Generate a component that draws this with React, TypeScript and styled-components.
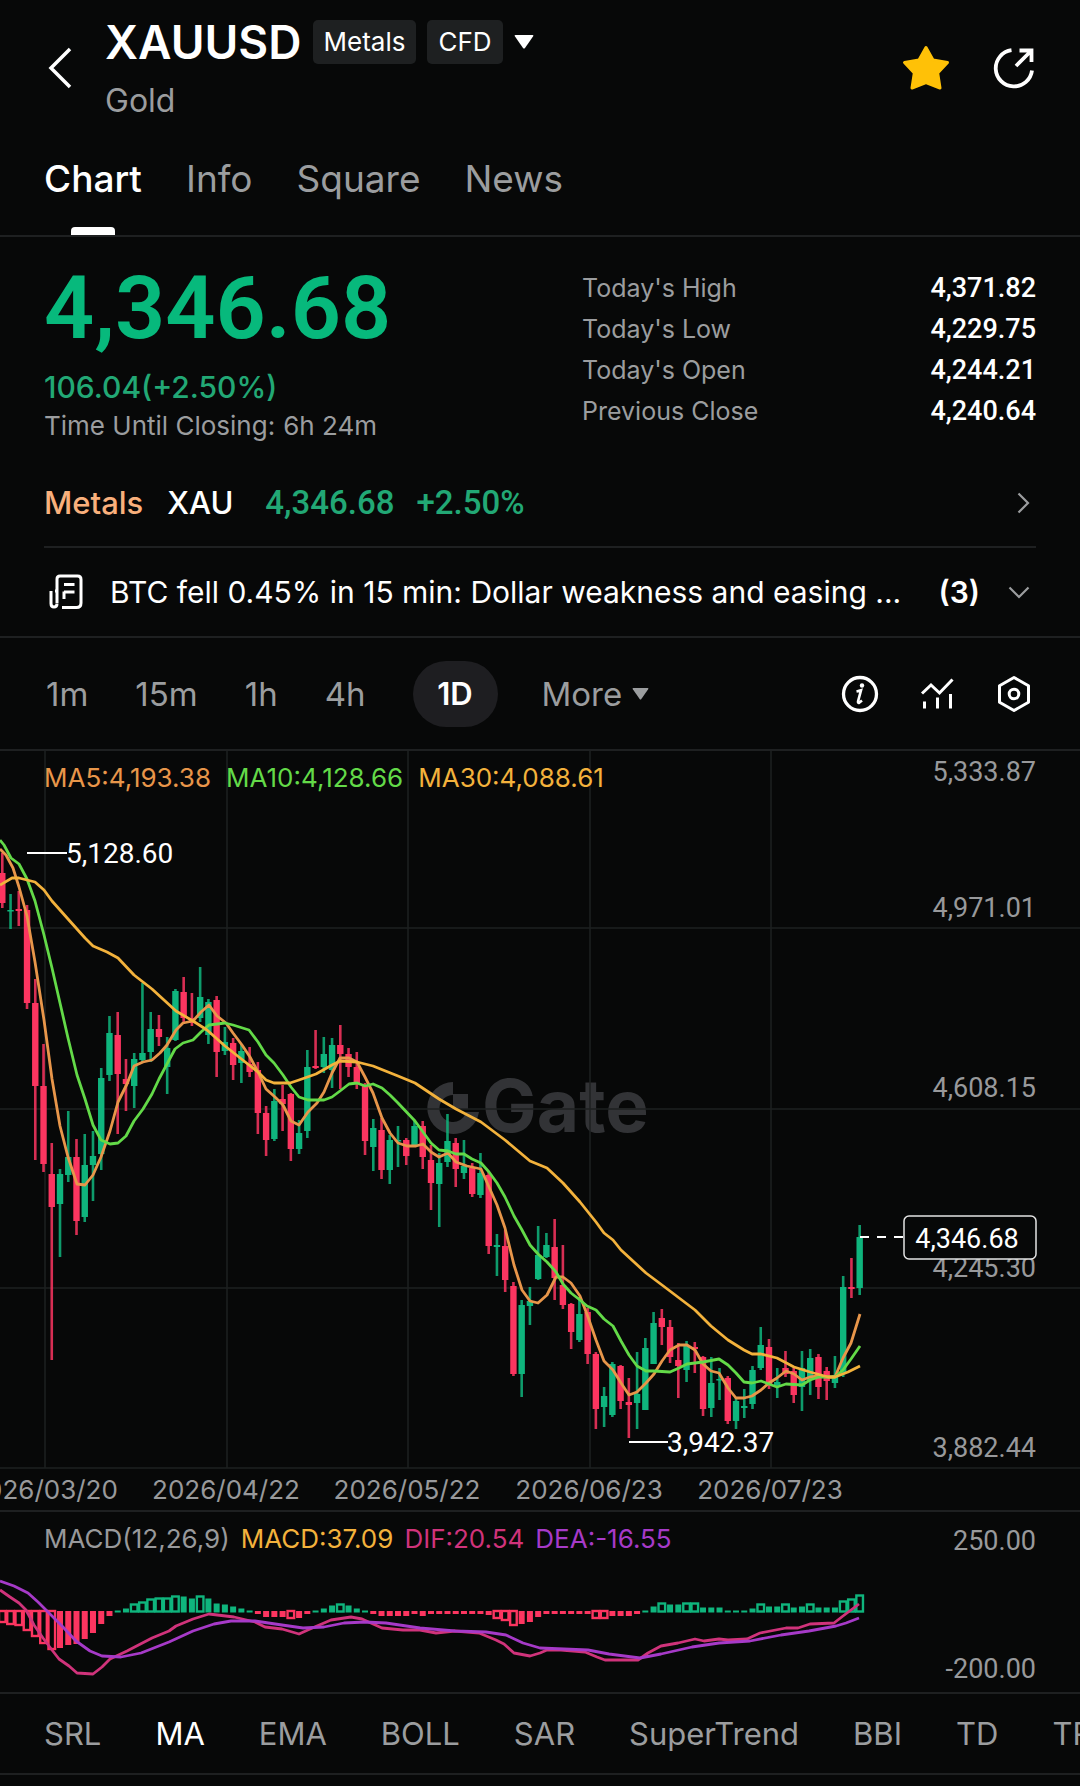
import React from "react";
import styled, { createGlobalStyle, css } from "styled-components";

const color = {
  bg: "#070808",
  text: "#ffffff",
  muted: "#9b9d9f",
  axis: "#98999b",
  line: "#1e2021",
  up: "#0fb57d",
  down: "#fc3560",
  price: "#07b97c",
  ma5: "#e8964a",
  ma10: "#63da48",
  ma30: "#f3b23c",
  dif: "#d0337b",
  dea: "#a63ac8",
};

const numeric = `Roboto, "Liberation Sans", sans-serif`;

const GlobalStyle = createGlobalStyle`
  *, *::before, *::after { box-sizing: border-box; }
  body {
    margin: 0;
    background: ${color.bg};
    color: ${color.text};
    font-family: Inter, "Liberation Sans", sans-serif;
    overflow-x: hidden;
  }
  button, a { font: inherit; color: inherit; }
`;

const Page = styled.main`
  display: flex;
  flex-direction: column;
  width: 100%;
  overflow: hidden;
`;

const PlainButton = styled.button`
  display: inline-flex;
  align-items: center;
  border: 0;
  padding: 0;
  background: none;
  cursor: pointer;
  white-space: nowrap;
`;

const Header = styled.header`
  display: flex;
  align-items: center;
  gap: 32px;
  padding: 14px 44px 0 46px;
`;

const Heading = styled.div`
  display: flex;
  flex-direction: column;
  gap: 10px;
  flex: 1;
`;

const TitleRow = styled.div`
  display: flex;
  align-items: center;
  gap: 11px;
`;

const Title = styled.h1`
  margin: 0;
  font-size: 46px;
  line-height: 56px;
  font-weight: 600;
`;

const Badge = styled.span`
  padding: 0 11px;
  border-radius: 5px;
  background: #1e2021;
  font-size: 26px;
  line-height: 44px;
`;

const Subtitle = styled.div`
  font-size: 32px;
  line-height: 42px;
  color: ${color.muted};
`;

const HeaderActions = styled.div`
  display: flex;
  align-items: center;
  gap: 42px;
`;

const Tabs = styled.nav`
  display: flex;
  gap: 44px;
  padding: 0 44px;
  margin-top: 14px;
  border-bottom: 2px solid ${color.line};
`;

const Tab = styled.a<{ $active?: boolean }>`
  display: flex;
  flex-direction: column;
  align-items: center;
  justify-content: space-between;
  height: 99px;
  padding-top: 20px;
  font-size: 37px;
  line-height: 46px;
  text-decoration: none;
  color: ${(p) => (p.$active ? color.text : color.muted)};
  font-weight: ${(p) => (p.$active ? 500 : 400)};
  ${(p) =>
    p.$active &&
    css`
      &::after {
        content: "";
        width: 44px;
        height: 8px;
        border-radius: 4px 4px 0 0;
        background: ${color.text};
      }
    `}
`;

const Quote = styled.section`
  display: grid;
  grid-template-columns: 538px 1fr;
  padding: 26px 44px 0;
`;

const Price = styled.div`
  font-family: ${numeric};
  font-size: 88px;
  line-height: 90px;
  font-weight: 600;
  color: ${color.price};
`;

const Change = styled.div`
  margin-top: 14px;
  font-size: 30px;
  line-height: 40px;
  font-weight: 500;
  color: #22a875;
`;

const Closing = styled.div`
  display: flex;
  gap: 8px;
  font-size: 26px;
  line-height: 37px;
  color: ${color.muted};
`;

const Stats = styled.dl`
  margin: 5px 0 0;
`;

const Stat = styled.div`
  display: flex;
  justify-content: space-between;
  font-size: 25px;
  line-height: 41px;
  dt { color: ${color.muted}; }
  dd {
    margin: 0;
    font-family: ${numeric};
    font-size: 27px;
    font-weight: 500;
  }
`;

const AssetLink = styled.a`
  display: flex;
  align-items: center;
  height: 89px;
  margin: 15px 44px 0;
  padding-right: 6px;
  border-bottom: 2px solid ${color.line};
  font-size: 31px;
  text-decoration: none;
`;

const AssetPart = styled.span<{ $tone?: string; $gap: number }>`
  margin-right: ${(p) => p.$gap}px;
  color: ${(p) => p.$tone ?? color.text};
  font-weight: 500;
`;

const AssetNumber = styled(AssetPart)`
  font-family: ${numeric};
  font-size: 33px;
`;

const Spacer = styled.span`
  flex: 1;
`;

const NewsButton = styled(PlainButton)`
  width: 100%;
  height: 90px;
  padding: 0 50px 0 48px;
  border-bottom: 2px solid ${color.line};
  font-size: 30px;
  text-align: left;
`;

const NewsTitle = styled.span`
  flex: 1;
  min-width: 0;
  margin-left: 26px;
  overflow: hidden;
  text-overflow: ellipsis;
  white-space: nowrap;
`;

const NewsCount = styled.span`
  margin: 0 28px 0 24px;
  font-weight: 600;
`;

const Intervals = styled.div`
  display: flex;
  align-items: center;
  height: 113px;
  padding: 0 47px 0 46px;
  border-bottom: 2px solid ${color.line};
  font-size: 33px;
`;

const Interval = styled(PlainButton)<{ $active?: boolean }>`
  margin-right: 47px;
  color: ${color.muted};
  ${(p) =>
    p.$active &&
    css`
      justify-content: center;
      min-width: 85px;
      height: 66px;
      margin-right: 44px;
      border-radius: 33px;
      background: #1e1e21;
      color: ${color.text};
      font-size: 31px;
      font-weight: 600;
    `}
`;

const Tools = styled.div`
  display: flex;
  align-items: center;
  gap: 39px;
  margin-left: auto;
`;

const Pane = styled.section`
  position: relative;
  border-bottom: 2px solid ${color.line};
  svg { display: block; width: 100%; height: auto; }
`;

const Legend = styled.div<{ $gap: number }>`
  position: absolute;
  left: 44px;
  top: 11px;
  display: flex;
  gap: ${(p) => p.$gap}px;
  font-size: 26px;
  line-height: 32px;
`;

const LegendItem = styled.span<{ $tone: string }>`
  color: ${(p) => p.$tone};
`;

const Indicators = styled.nav`
  display: flex;
  gap: 54px;
  height: 81px;
  padding: 0 44px;
  border-bottom: 2px solid ${color.line};
  font-size: 31px;
  overflow: hidden;
`;

const Indicator = styled(PlainButton)<{ $active?: boolean }>`
  color: ${(p) => (p.$active ? color.text : color.muted)};
`;

const AxisText = styled.text`
  font-family: ${numeric};
  font-size: 27px;
  fill: ${color.axis};
`;

const DateText = styled.text`
  font-size: 26px;
  fill: ${color.axis};
`;

const MarkText = styled.text<{ $large?: boolean }>`
  font-family: ${numeric};
  font-size: ${(p) => (p.$large ? 28 : 27)}px;
  fill: ${color.text};
`;

const Watermark = styled.text`
  font-size: 73px;
  font-weight: 700;
`;

/* ---------- chart data ---------- */

// Vertical positions per candle: direction, high, body top, body bottom, low.
type Candle = ["u" | "d", number, number, number, number];

const candles: Candle[] = [
  ["d", 853, 873, 903, 908], ["u", 894, 910, 911, 929], ["d", 891, 909, 911, 926], ["d", 905, 910, 1003, 1009],
  ["d", 979, 1003, 1086, 1160], ["d", 1044, 1086, 1164, 1172], ["d", 1143, 1174, 1207, 1360], ["u", 1169, 1174, 1204, 1257],
  ["u", 1111, 1157, 1175, 1182], ["d", 1139, 1157, 1221, 1235], ["u", 1134, 1165, 1217, 1222], ["u", 1131, 1156, 1165, 1201],
  ["u", 1068, 1078, 1154, 1170], ["u", 1016, 1033, 1075, 1081], ["d", 1012, 1035, 1074, 1134], ["d", 1059, 1079, 1084, 1111],
  ["u", 1053, 1059, 1086, 1108], ["u", 983, 1053, 1060, 1062], ["u", 1012, 1029, 1052, 1062], ["d", 1015, 1029, 1037, 1046],
  ["u", 1037, 1048, 1067, 1094], ["u", 989, 991, 1040, 1041], ["d", 977, 992, 1018, 1022], ["d", 993, 1018, 1023, 1026],
  ["u", 967, 997, 1018, 1022], ["u", 999, 1002, 1035, 1044], ["d", 996, 1000, 1052, 1077], ["u", 1027, 1042, 1051, 1055],
  ["d", 1038, 1043, 1065, 1080], ["u", 1044, 1051, 1063, 1083], ["d", 1047, 1064, 1072, 1077], ["d", 1062, 1070, 1113, 1134],
  ["d", 1106, 1113, 1140, 1156], ["u", 1089, 1101, 1139, 1141], ["d", 1085, 1099, 1104, 1131], ["d", 1093, 1094, 1149, 1161],
  ["u", 1120, 1133, 1149, 1154], ["u", 1050, 1067, 1131, 1138], ["d", 1030, 1066, 1068, 1069], ["u", 1037, 1054, 1067, 1073],
  ["u", 1038, 1045, 1070, 1088], ["d", 1025, 1045, 1054, 1089], ["d", 1048, 1054, 1067, 1077], ["d", 1052, 1067, 1084, 1089],
  ["d", 1083, 1086, 1141, 1155], ["u", 1119, 1128, 1147, 1171], ["d", 1118, 1130, 1170, 1179], ["u", 1135, 1140, 1170, 1184],
  ["u", 1126, 1140, 1141, 1167], ["d", 1138, 1140, 1156, 1165], ["u", 1120, 1126, 1145, 1147], ["d", 1121, 1126, 1157, 1169],
  ["d", 1145, 1160, 1183, 1210], ["u", 1153, 1163, 1184, 1227], ["u", 1114, 1141, 1162, 1167], ["d", 1138, 1143, 1169, 1187],
  ["u", 1140, 1166, 1173, 1179], ["d", 1163, 1168, 1194, 1197], ["u", 1153, 1173, 1195, 1198], ["d", 1172, 1175, 1246, 1254],
  ["u", 1234, 1245, 1247, 1276], ["d", 1230, 1246, 1280, 1292], ["d", 1282, 1286, 1374, 1376], ["u", 1300, 1305, 1374, 1397],
  ["u", 1287, 1301, 1306, 1325], ["u", 1226, 1255, 1279, 1280], ["u", 1233, 1245, 1257, 1258], ["d", 1219, 1247, 1278, 1300],
  ["d", 1245, 1285, 1305, 1309], ["d", 1303, 1304, 1332, 1349], ["u", 1297, 1314, 1340, 1342], ["d", 1308, 1312, 1354, 1364],
  ["d", 1352, 1354, 1409, 1429], ["u", 1387, 1396, 1407, 1427], ["u", 1362, 1364, 1415, 1417], ["d", 1365, 1366, 1401, 1409],
  ["d", 1378, 1402, 1405, 1438], ["u", 1352, 1394, 1403, 1429], ["u", 1338, 1348, 1410, 1410], ["u", 1312, 1323, 1364, 1364],
  ["d", 1309, 1318, 1327, 1345], ["d", 1320, 1327, 1357, 1363], ["d", 1343, 1360, 1366, 1398], ["u", 1341, 1346, 1370, 1382],
  ["d", 1342, 1347, 1349, 1373], ["d", 1356, 1357, 1409, 1416], ["u", 1357, 1383, 1408, 1417], ["u", 1368, 1379, 1380, 1400],
  ["d", 1376, 1378, 1421, 1424], ["u", 1398, 1401, 1421, 1429], ["u", 1389, 1406, 1408, 1418], ["u", 1366, 1370, 1404, 1409],
  ["u", 1327, 1345, 1368, 1370], ["d", 1339, 1347, 1385, 1389], ["u", 1368, 1382, 1385, 1398], ["d", 1351, 1368, 1374, 1377],
  ["d", 1368, 1371, 1395, 1403], ["u", 1351, 1368, 1387, 1411], ["u", 1349, 1358, 1380, 1395], ["d", 1354, 1357, 1387, 1399],
  ["d", 1367, 1371, 1381, 1400], ["u", 1356, 1375, 1383, 1388], ["u", 1276, 1287, 1373, 1377], ["d", 1258, 1287, 1289, 1298],
  ["u", 1225, 1237, 1288, 1295],
];

const ma5 =
  "0,849 6,855 13,868 19,887 27,916 35,962 44,1020 52,1079 60,1126 68,1157 77,1184 85,1185 93,1175 101,1157 110,1131 118,1102 127,1084 134,1066 143,1062 152,1060 160,1053 167,1045 176,1030 183,1023 193,1021 201,1012 209,1005 217,1016 226,1023 233,1033 242,1045 250,1057 258,1072 266,1089 275,1097 283,1105 291,1121 299,1125 308,1112 317,1103 324,1092 332,1073 340,1058 349,1058 357,1062 365,1077 373,1093 382,1118 390,1133 398,1143 407,1146 416,1146 423,1144 431,1152 439,1157 448,1153 456,1162 467,1166 481,1169 489,1187 497,1205 505,1228 514,1265 522,1290 530,1301 538,1303 547,1295 556,1277 563,1277 571,1283 580,1296 588,1317 596,1340 604,1361 613,1370 621,1383 629,1395 637,1392 646,1383 654,1374 662,1361 670,1350 679,1345 687,1345 695,1350 703,1364 711,1371 719,1373 728,1388 736,1398 744,1398 752,1396 761,1390 769,1383 777,1378 786,1371 794,1374 802,1380 810,1377 819,1376 828,1377 835,1377 843,1358 851,1343 860,1314";
const ma10 =
  "0,840 4,845 11,858 19,864 27,879 35,901 44,935 52,968 60,1003 68,1038 77,1075 85,1099 93,1125 101,1140 110,1144 118,1143 126,1136 134,1121 143,1109 152,1094 159,1079 167,1064 175,1049 183,1043 193,1040 201,1032 209,1025 225,1023 233,1025 249,1030 258,1042 266,1055 274,1063 283,1075 291,1087 299,1097 308,1100 324,1100 332,1097 340,1091 349,1084 357,1083 365,1086 373,1084 382,1088 390,1095 398,1103 415,1121 423,1132 431,1143 439,1150 448,1151 456,1154 464,1154 472,1159 481,1163 489,1172 497,1183 505,1197 514,1216 522,1230 530,1245 538,1254 547,1262 556,1272 563,1284 571,1293 580,1300 587,1306 596,1310 604,1319 613,1326 621,1341 629,1355 637,1366 646,1371 654,1371 670,1372 679,1368 687,1364 703,1362 719,1359 728,1365 736,1373 744,1382 752,1383 761,1381 769,1384 777,1387 786,1384 802,1385 810,1380 819,1377 835,1377 843,1370 851,1359 860,1346";
const ma30 =
  "0,885 12,878 19,878 35,882 44,890 52,901 68,919 85,938 93,946 107,952 118,958 134,975 152,989 176,1011 193,1021 207,1030 225,1046 249,1065 258,1072 266,1080 274,1083 290,1083 299,1080 316,1074 332,1065 340,1061 357,1062 373,1066 398,1076 415,1083 439,1099 456,1109 481,1122 505,1140 530,1161 547,1168 563,1183 580,1202 596,1222 604,1233 613,1240 621,1250 646,1273 662,1285 695,1310 711,1326 728,1340 744,1350 752,1354 761,1354 777,1358 794,1367 810,1372 828,1377 835,1377 848,1372 860,1366";

// Signed histogram heights.
const histogram = [
  -12, -14, -15, -20, -26, -33, -39, -37, -34, -33, -28, -22, -13, -5, 2, 4, 8, 10, 13, 14, 14, 16, 16, 14, 16, 14, 9, 8, 6,
  4, 2, -3, -6, -6, -6, -8, -7, -3, 2, 4, 7, 8, 7, 4, 2, -3, -5, -5, -5, -5, -3, -5, -3, -3, -3, -3, -3, -3, -3, -4, -8,
  -10, -15, -13, -11, -6, -3, -3, -3, -3, -3, -3, -8, -8, -5, -5, -5, -3, 2, 6, 9, 8, 8, 9, 9, 5, 5, 5, 2, 2, 2, 4, 8, 6,
  6, 8, 5, 6, 8, 5, 5, 5, 11, 13, 17,
];
const hollow = new Set([0, 1, 2, 3, 4, 5, 6, 16, 17, 18, 19, 20, 21, 24, 35, 41, 60, 61, 62, 72, 73, 80, 83, 84, 92, 95, 98, 102, 103, 104]);

const dif =
  "0,1590 10,1597 19,1603 26,1610 34,1625 43,1638 52,1650 59,1659 69,1666 77,1673 93,1674 102,1667 110,1659 127,1651 152,1638 169,1631 176,1626 193,1619 209,1614 234,1617 255,1622 265,1627 282,1629 299,1634 310,1629 331,1620 351,1617 362,1619 382,1628 403,1630 420,1630 436,1633 455,1631 479,1633 496,1640 504,1644 514,1653 530,1656 540,1653 547,1650 561,1650 585,1652 597,1657 605,1660 638,1660 648,1653 661,1646 678,1643 695,1639 704,1641 719,1639 728,1640 747,1639 760,1633 786,1628 798,1628 810,1624 834,1623 843,1616 859,1604";
const dea =
  "0,1581 14,1586 28,1593 38,1602 48,1612 62,1626 76,1641 90,1651 102,1656 121,1657 141,1653 169,1642 193,1631 214,1624 231,1621 255,1621 282,1625 303,1628 324,1627 344,1623 365,1622 386,1623 420,1628 455,1631 486,1632 506,1635 523,1643 540,1648 564,1649 588,1650 609,1654 640,1658 661,1654 692,1647 719,1643 750,1641 781,1635 809,1631 836,1626 846,1623 859,1618";

const candleX = (i: number) => 2.3 + i * 8.244;
const gridX = [45, 227, 408, 590, 771];
const dates = ["2026/03/20", "2026/04/22", "2026/05/22", "2026/06/23", "2026/07/23"];
const priceLabels: [string, number][] = [
  ["5,333.87", 781],
  ["4,971.01", 917],
  ["4,608.15", 1097],
  ["4,245.30", 1277],
  ["3,882.44", 1457],
];

const Line = ({ points, stroke }: { points: string; stroke: string }) => (
  <polyline points={points} fill="none" stroke={stroke} strokeWidth={2.8} strokeLinejoin="round" />
);

function PriceChart() {
  return (
    <svg viewBox="0 751 1080 759" role="img" aria-label="XAUUSD daily candles">
      <g fill="#323336">
        <path d="M453 1082v13a13.500 13.500 0 1 0 13 17h13a26 26 0 1 1-26-30z" />
        <rect x="453" y="1094" width="15" height="15" />
        <Watermark x="482" y="1132">Gate</Watermark>
      </g>
      <g stroke={color.line} strokeWidth="1.500">
        {gridX.map((x) => (
          <line key={x} x1={x} x2={x} y1="751" y2="1468" />
        ))}
        {[928, 1109, 1288, 1468].map((y) => (
          <line key={y} x1="0" x2="1080" y1={y} y2={y} />
        ))}
      </g>
      {candles.map(([dir, high, top, bottom, low], i) => {
        const x = candleX(i);
        return (
          <g key={i} fill={dir === "u" ? color.up : color.down}>
            <rect x={x - 1.3} y={high} width={2.6} height={low - high} opacity={0.85} />
            <rect x={x - 3.2} y={top} width={6.4} height={Math.max(bottom - top, 1.5)} />
          </g>
        );
      })}
      <Line points={ma5} stroke={color.ma5} />
      <Line points={ma10} stroke={color.ma10} />
      <Line points={ma30} stroke={color.ma30} />
      <g stroke="#fff" strokeWidth="1.800">
        <line x1="27" x2="67" y1="853" y2="853" />
        <line x1="629" x2="668" y1="1442" y2="1442" />
        <line x1="860" x2="903" y1="1237" y2="1237" strokeDasharray="9 8" />
      </g>
      <MarkText $large x="66" y="863">5,128.60</MarkText>
      <MarkText $large x="667" y="1452">3,942.37</MarkText>
      {priceLabels.map(([label, y]) => (
        <AxisText key={label} x="1036" y={y} textAnchor="end">
          {label}
        </AxisText>
      ))}
      <rect x="904" y="1216" width="132" height="43" rx="5" fill={color.bg} stroke="#e4e4e4" strokeWidth="1.500" />
      <MarkText x="967" y="1248" textAnchor="middle">4,346.68</MarkText>
      {dates.map((date, i) => (
        <DateText key={date} x={gridX[i] - 1} y="1499" textAnchor="middle">
          {date}
        </DateText>
      ))}
    </svg>
  );
}

function MacdChart() {
  return (
    <svg viewBox="0 1512 1080 180" role="img" aria-label="MACD">
      {histogram.map((value, i) => {
        const up = value > 0;
        const x = candleX(i);
        const tone = up ? color.up : color.down;
        const height = Math.abs(value);
        const y = up ? 1612.5 - height : 1611;
        return hollow.has(i) ? (
          <rect key={i} x={x - 3.3} y={y} width={6.6} height={height - 1} fill="none" stroke={tone} strokeWidth={2.4} />
        ) : (
          <rect key={i} x={x - 3} y={y} width={6} height={height} fill={tone} />
        );
      })}
      <Line points={dif} stroke={color.dif} />
      <Line points={dea} stroke={color.dea} />
      <AxisText x="1036" y="1550" textAnchor="end">250.00</AxisText>
      <AxisText x="1036" y="1678" textAnchor="end">-200.00</AxisText>
    </svg>
  );
}

/* ---------- icons ---------- */

const BackIcon = () => (
  <svg width="27" height="44" viewBox="0 0 27 44" fill="none" stroke="#fff" strokeWidth="3.500">
    <path d="M24 3 5 22l19 19" />
  </svg>
);
const Caret = ({ size, fill }: { size: number; fill: string }) => (
  <svg width={size} height={Math.round(size * 0.7)} viewBox="0 0 20 14" fill={fill}>
    <path d="M1.500 0h17q1.500 0 .5 1.500L11 13q-1 1.200-2 0L1 1.500Q0 0 1.500 0z" />
  </svg>
);
const StarIcon = () => (
  <svg width="48" height="46" viewBox="0 0 48 46" fill="#ffc107" stroke="#ffc107" strokeWidth="3" strokeLinejoin="round">
    <path d="M24 2.500l7 12.500 14.500 2.500-9.800 10.500 2.300 15L24 37.500 10 43l2.300-15L2.500 17.500 17 15z" />
  </svg>
);
const ShareIcon = () => (
  <svg width="44" height="44" viewBox="0 0 44 44" fill="none" stroke="#fff" strokeWidth="3.800">
    <path d="M19.500 4.200A18.200 18.200 0 1 0 40 24.500" />
    <path d="M24 20 38 6M27.500 4.500H39.500V16" />
  </svg>
);
const NewsIcon = () => (
  <svg width="36" height="36" viewBox="0 0 36 36" fill="none" stroke="#fff" strokeWidth="3">
    <path d="M9 29V5q0-3 3-3h17.500q3.500 0 3.500 3.500V29q0 4.500-4.500 4.500H14" />
    <path d="M9 17H7M3 17v12.500q0 3.500 3 3.500t3-3.500" />
    <path d="M16 10.500h10.500M16 18h10.500M16 25v-7.500" />
  </svg>
);
const ChevronIcon = ({ down }: { down?: boolean }) => (
  <svg width={down ? 22 : 13} height={down ? 13 : 22} viewBox={down ? "0 0 22 13" : "0 0 13 22"} fill="none" stroke={color.muted} strokeWidth="2.200">
    <path d={down ? "M1.500 1.500 11 11l9.500-9.500" : "M1.500 1.500 11 11l-9.500 9.500"} />
  </svg>
);
const InfoIcon = () => (
  <svg width="38" height="38" viewBox="0 0 38 38" fill="none" stroke="#fff" strokeWidth="3.300">
    <circle cx="19" cy="19" r="16.500" />
    <path d="M15.500 16.500q3-.6 4.500-1.200L17 26.500q-.3 2 1.500 1l2.500-2" strokeWidth="2.600" />
    <circle cx="21" cy="10.500" r="2.200" fill="#fff" stroke="none" />
  </svg>
);
const IndicatorIcon = () => (
  <svg width="38" height="38" viewBox="0 0 38 38" fill="none" stroke="#fff" strokeWidth="3">
    <path d="M4 18.500 13 10l8.500 8L34.500 4.500" />
    <path d="M6.500 26.500v7M19.500 22.500v11M32.500 19v14.500" />
  </svg>
);
const SettingsIcon = () => (
  <svg width="38" height="38" viewBox="0 0 38 38" fill="none" stroke="#fff" strokeWidth="3" strokeLinejoin="round">
    <path d="M19 2.500 33.500 10.800v16.400L19 35.500 4.500 27.200V10.800z" />
    <circle cx="19" cy="19" r="4.800" />
  </svg>
);

export default function App() {
  return (
    <Page>
      <GlobalStyle />
      <Header>
        <PlainButton aria-label="Back"><BackIcon /></PlainButton>
        <Heading>
          <TitleRow>
            <Title>XAUUSD</Title>
            <Badge>Metals</Badge>
            <Badge>CFD</Badge>
            <PlainButton aria-label="Switch market"><Caret size={20} fill="#fff" /></PlainButton>
          </TitleRow>
          <Subtitle>Gold</Subtitle>
        </Heading>
        <HeaderActions>
          <PlainButton aria-label="Favorite"><StarIcon /></PlainButton>
          <PlainButton aria-label="Share"><ShareIcon /></PlainButton>
        </HeaderActions>
      </Header>
      <Tabs>
        <Tab href="#chart" $active>Chart</Tab>
        <Tab href="#info">Info</Tab>
        <Tab href="#square">Square</Tab>
        <Tab href="#news">News</Tab>
      </Tabs>
      <Quote>
        <div>
          <Price>4,346.68</Price>
          <Change>106.04(+2.50%)</Change>
          <Closing><span>Time Until Closing:</span><span>6h 24m</span></Closing>
        </div>
        <Stats>
          <Stat><dt>Today's High</dt><dd>4,371.82</dd></Stat>
          <Stat><dt>Today's Low</dt><dd>4,229.75</dd></Stat>
          <Stat><dt>Today's Open</dt><dd>4,244.21</dd></Stat>
          <Stat><dt>Previous Close</dt><dd>4,240.64</dd></Stat>
        </Stats>
      </Quote>
      <AssetLink href="#metals">
        <AssetPart $tone="#f9b07c" $gap={24}>Metals</AssetPart>
        <AssetPart $gap={32}>XAU</AssetPart>
        <AssetNumber $tone="#22a875" $gap={22}>4,346.68</AssetNumber>
        <AssetNumber $tone="#22a875" $gap={0}>+2.50%</AssetNumber>
        <Spacer />
        <ChevronIcon />
      </AssetLink>
      <NewsButton>
        <NewsIcon />
        <NewsTitle>BTC fell 0.45% in 15 min: Dollar weakness and easing ...</NewsTitle>
        <NewsCount>(3)</NewsCount>
        <ChevronIcon down />
      </NewsButton>
      <Intervals>
        <Interval>1m</Interval>
        <Interval>15m</Interval>
        <Interval>1h</Interval>
        <Interval>4h</Interval>
        <Interval $active>1D</Interval>
        <Interval>More&nbsp;<Caret size={17} fill={color.muted} /></Interval>
        <Tools>
          <PlainButton aria-label="Information"><InfoIcon /></PlainButton>
          <PlainButton aria-label="Indicators"><IndicatorIcon /></PlainButton>
          <PlainButton aria-label="Settings"><SettingsIcon /></PlainButton>
        </Tools>
      </Intervals>
      <Pane>
        <PriceChart />
        <Legend $gap={15}>
          <LegendItem $tone={color.ma5}>MA5:4,193.38</LegendItem>
          <LegendItem $tone={color.ma10}>MA10:4,128.66</LegendItem>
          <LegendItem $tone={color.ma30}>MA30:4,088.61</LegendItem>
        </Legend>
      </Pane>
      <Pane>
        <MacdChart />
        <Legend $gap={11}>
          <LegendItem $tone={color.axis}>MACD(12,26,9)</LegendItem>
          <LegendItem $tone={color.ma30}>MACD:37.09</LegendItem>
          <LegendItem $tone={color.dif}>DIF:20.54</LegendItem>
          <LegendItem $tone={color.dea}>DEA:-16.55</LegendItem>
        </Legend>
      </Pane>
      <Indicators>
        <Indicator>SRL</Indicator>
        <Indicator $active>MA</Indicator>
        <Indicator>EMA</Indicator>
        <Indicator>BOLL</Indicator>
        <Indicator>SAR</Indicator>
        <Indicator>SuperTrend</Indicator>
        <Indicator>BBI</Indicator>
        <Indicator>TD</Indicator>
        <Indicator>TRIX</Indicator>
      </Indicators>
    </Page>
  );
}
